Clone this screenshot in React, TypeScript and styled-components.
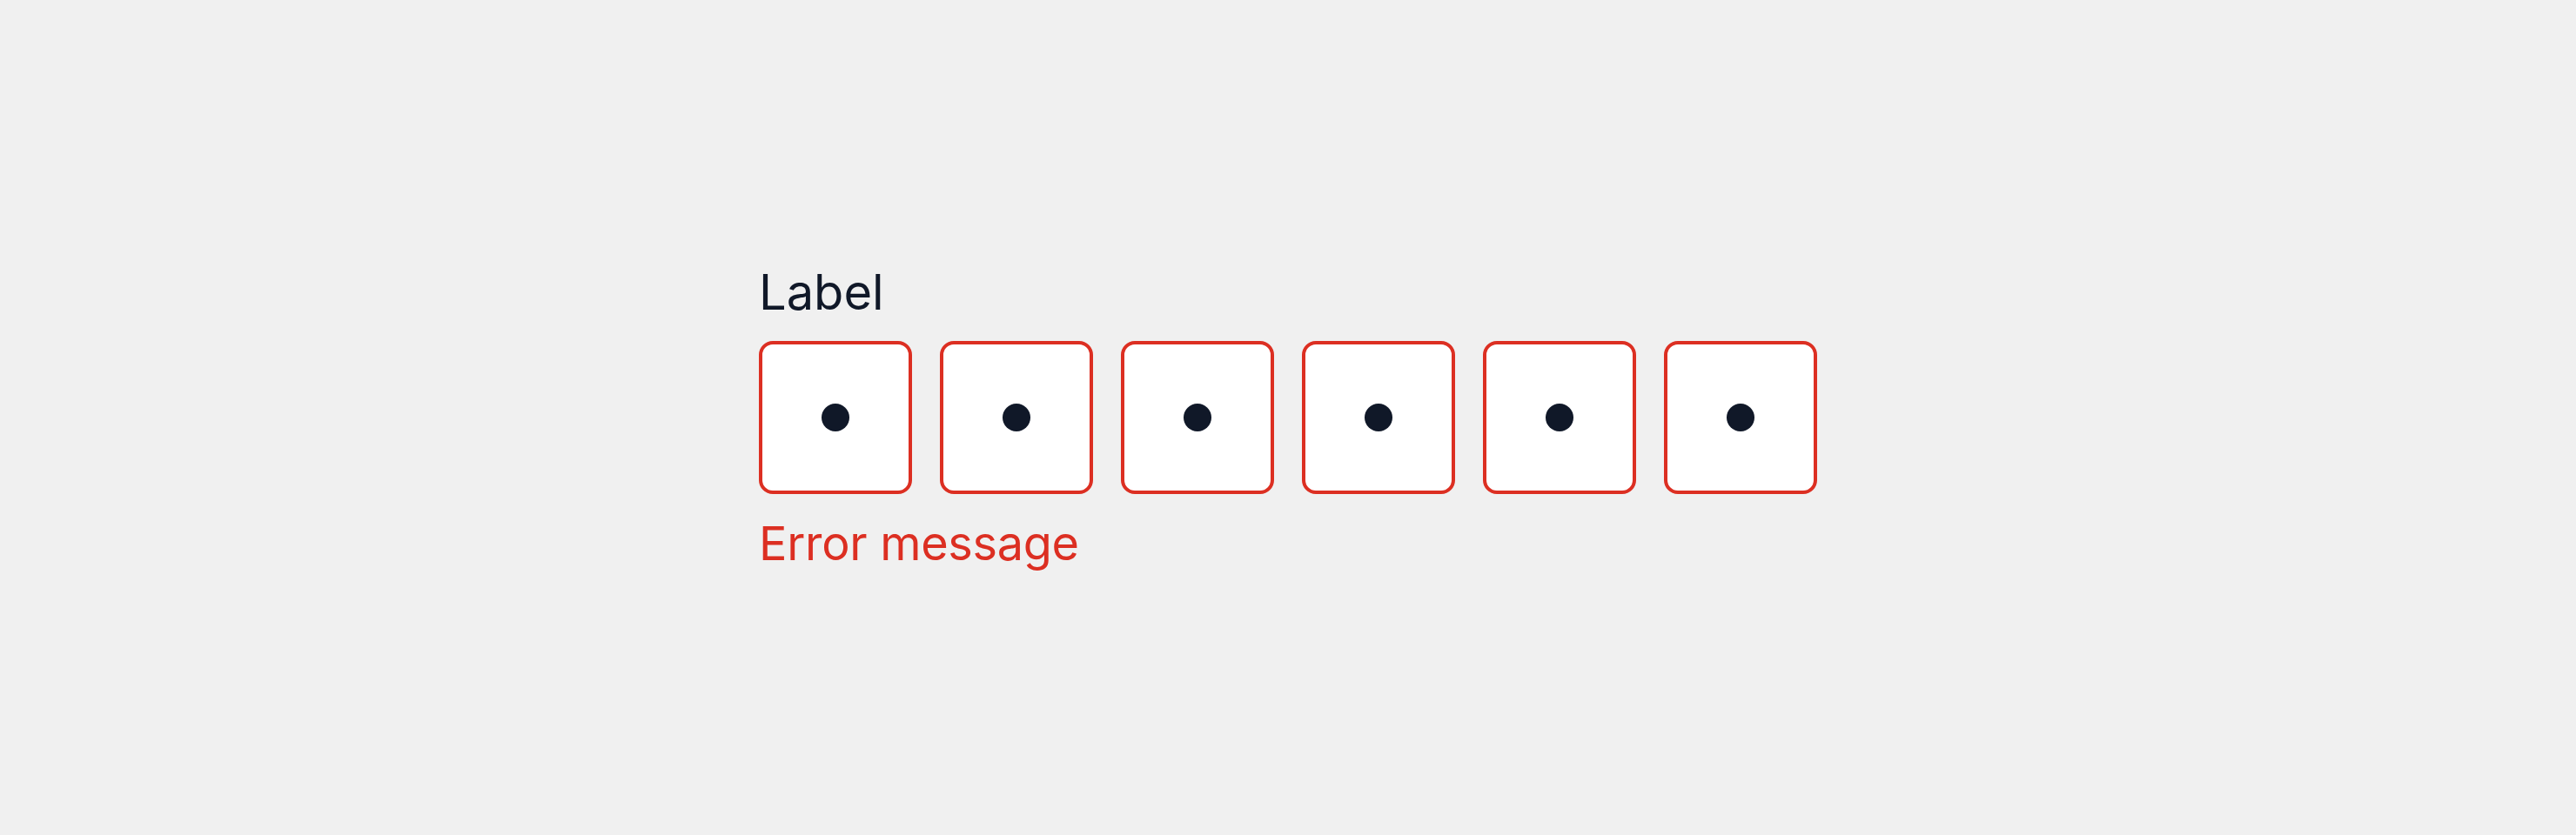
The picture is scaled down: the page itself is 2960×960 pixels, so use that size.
import { FC } from "react";
import styled, { createGlobalStyle } from "styled-components";

const GlobalStyle = createGlobalStyle`
  html,
  body {
    margin: 0;
    padding: 0;
    background: #f0f0f0;
  }
  body {
    font-family: Inter, "Noto Sans", sans-serif;
  }
`;

const Page = styled.div`
  width: 2960px;
  height: 960px;
  padding: 303px 0 0 872px;
  box-sizing: border-box;
`;

const Field = styled.div`
  display: flex;
  flex-direction: column;
  align-items: flex-start;
`;

const Label = styled.label`
  font-size: 56px;
  line-height: 67px;
  font-weight: 400;
  color: #101828;
`;

const Cells = styled.div`
  display: flex;
  gap: 32px;
  margin-top: 22px;
`;

const Cell = styled.div<{ $invalid?: boolean }>`
  width: 176px;
  height: 176px;
  box-sizing: border-box;
  background: #ffffff;
  border: 4px solid ${(p) => (p.$invalid ? "#dc2f22" : "#d0d5dd")};
  border-radius: 16px;

  display: flex;
  align-items: center;
  justify-content: center;
`;

const Dot = styled.span`
  width: 32px;
  height: 32px;
  border-radius: 50%;
  background: #101828;
`;

const ErrorText = styled.div`
  margin-top: 24px;
  font-size: 54px;
  line-height: 66px;
  font-weight: 400;
  letter-spacing: -0.3px;
  color: #dc2f22;
`;

interface Props {
  length?: number;
  label?: string;
  error?: string;
}

const PinInput: FC<Props> = ({ length = 6, label, error }) => {
  return (
    <Field>
      {label && <Label>{label}</Label>}
      <Cells>
        {Array.from({ length }).map((_, i) => (
          <Cell key={i} $invalid={!!error}>
            <Dot />
          </Cell>
        ))}
      </Cells>
      {error && <ErrorText>{error}</ErrorText>}
    </Field>
  );
};

export default function App() {
  return (
    <>
      <GlobalStyle />
      <Page>
        <PinInput label="Label" error="Error message" />
      </Page>
    </>
  );
}
